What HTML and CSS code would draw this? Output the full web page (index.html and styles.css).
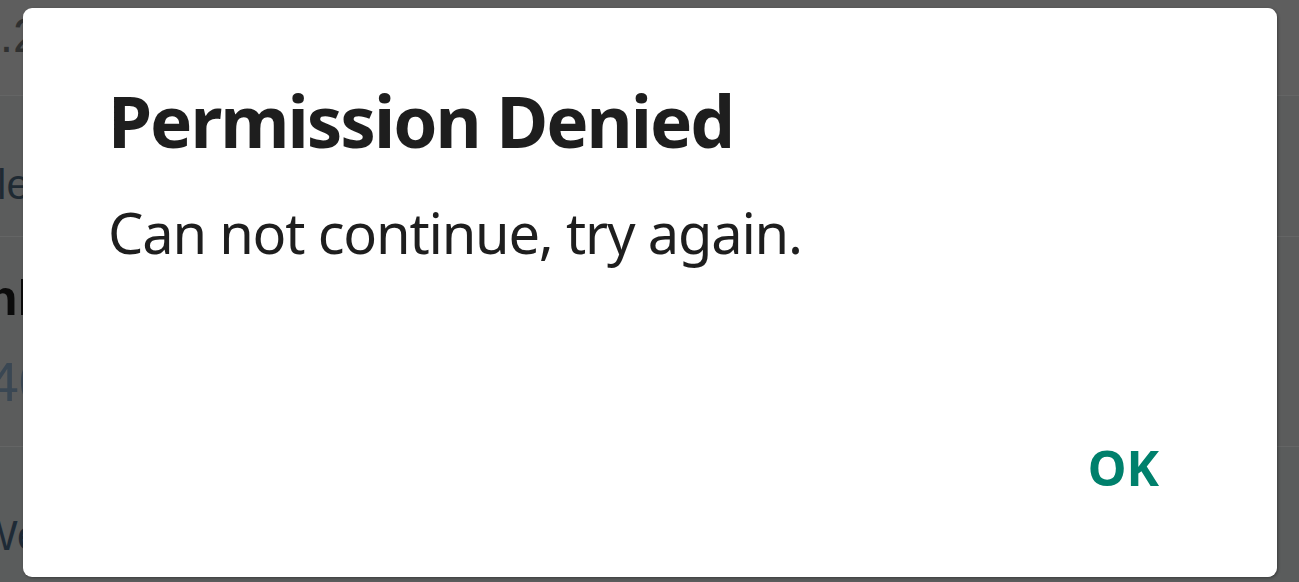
FILE: index.html
```html
<!DOCTYPE html>
<html>
<head>
<meta charset="utf-8">
<link rel="stylesheet" href="styles.css">
</head>
<body>
<div class="screen">
  <div class="backdrop">
    <div class="bg-row bg-head"><span class="bg-text t1">1.2</span></div>
    <div class="bg-row bg-mid"><span class="bg-text t2">Module</span></div>
    <div class="bg-row bg-tall">
      <span class="bg-text t3">Online</span>
      <span class="bg-text t4">1240</span>
    </div>
    <div class="bg-row bg-last"><span class="bg-text t5">Website</span></div>
  </div>
  <div class="dialog">
    <h1 class="title">Permission Denied</h1>
    <p class="message">Can not continue, try again.</p>
    <div class="actions"><span class="ok">OK</span></div>
  </div>
</div>
</body>
</html>
```
FILE: styles.css
```css
html, body {
  margin: 0;
  padding: 0;
}
body {
  width: 1299px;
  height: 582px;
  overflow: hidden;
  background: #5b5c5c;
  font-family: "Noto Sans", "Open Sans", sans-serif;
}
.screen {
  position: relative;
  width: 1299px;
  height: 582px;
}
.backdrop {
  display: flex;
  flex-direction: column;
  height: 582px;
}
.bg-row {
  display: flex;
  flex-direction: column;
  border-bottom: 1px solid #646565;
  box-sizing: border-box;
  overflow: hidden;
}
.bg-head {
  height: 96px;
  background: #5e5e5e;
}
.bg-mid {
  height: 141px;
  background: #5b5c5c;
}
.bg-tall {
  height: 210px;
  background: #5b5c5c;
}
.bg-last {
  flex: 1;
  background: #5a5c5c;
  border-bottom: none;
}
.bg-text {
  display: block;
  white-space: nowrap;
  line-height: 1;
  font-family: "Liberation Sans", sans-serif;
}
.t1 {
  font-size: 48px;
  color: #2f3030;
  margin-left: -27px;
  margin-top: 12px;
}
.t2 {
  font-size: 42px;
  color: #1f2a33;
  margin-left: -108px;
  margin-top: 68px;
}
.t3 {
  font-size: 50px;
  font-weight: bold;
  color: #0b0b0b;
  margin-left: -52px;
  margin-top: 36px;
}
.t4 {
  font-size: 55px;
  color: #3a4753;
  margin-left: -73px;
  margin-top: 32px;
}
.t5 {
  font-size: 42px;
  color: #1e2a36;
  margin-left: -22px;
  margin-top: 68px;
}
.dialog {
  position: absolute;
  left: 23px;
  top: 8px;
  width: 1254px;
  height: 569px;
  background: #ffffff;
  border-radius: 9px;
  box-shadow: 1px 1px 3px rgba(0, 0, 0, 0.35);
  box-sizing: border-box;
  padding: 0 118px 0 85px;
  display: flex;
  flex-direction: column;
}
.title {
  margin: 70px 0 0 0;
  font-size: 71px;
  font-weight: 700;
  letter-spacing: -2px;
  line-height: 1.2;
  color: #1e1e1e;
}
.message {
  margin: 36px 0 0 0;
  font-size: 56px;
  font-weight: 400;
  letter-spacing: -1.2px;
  line-height: 1.2;
  color: #1e1e1e;
}
.actions {
  margin-top: auto;
  margin-bottom: 80px;
  display: flex;
  justify-content: flex-end;
}
.ok {
  font-size: 49px;
  font-weight: 700;
  line-height: 1.2;
  color: #00806c;
}
```
